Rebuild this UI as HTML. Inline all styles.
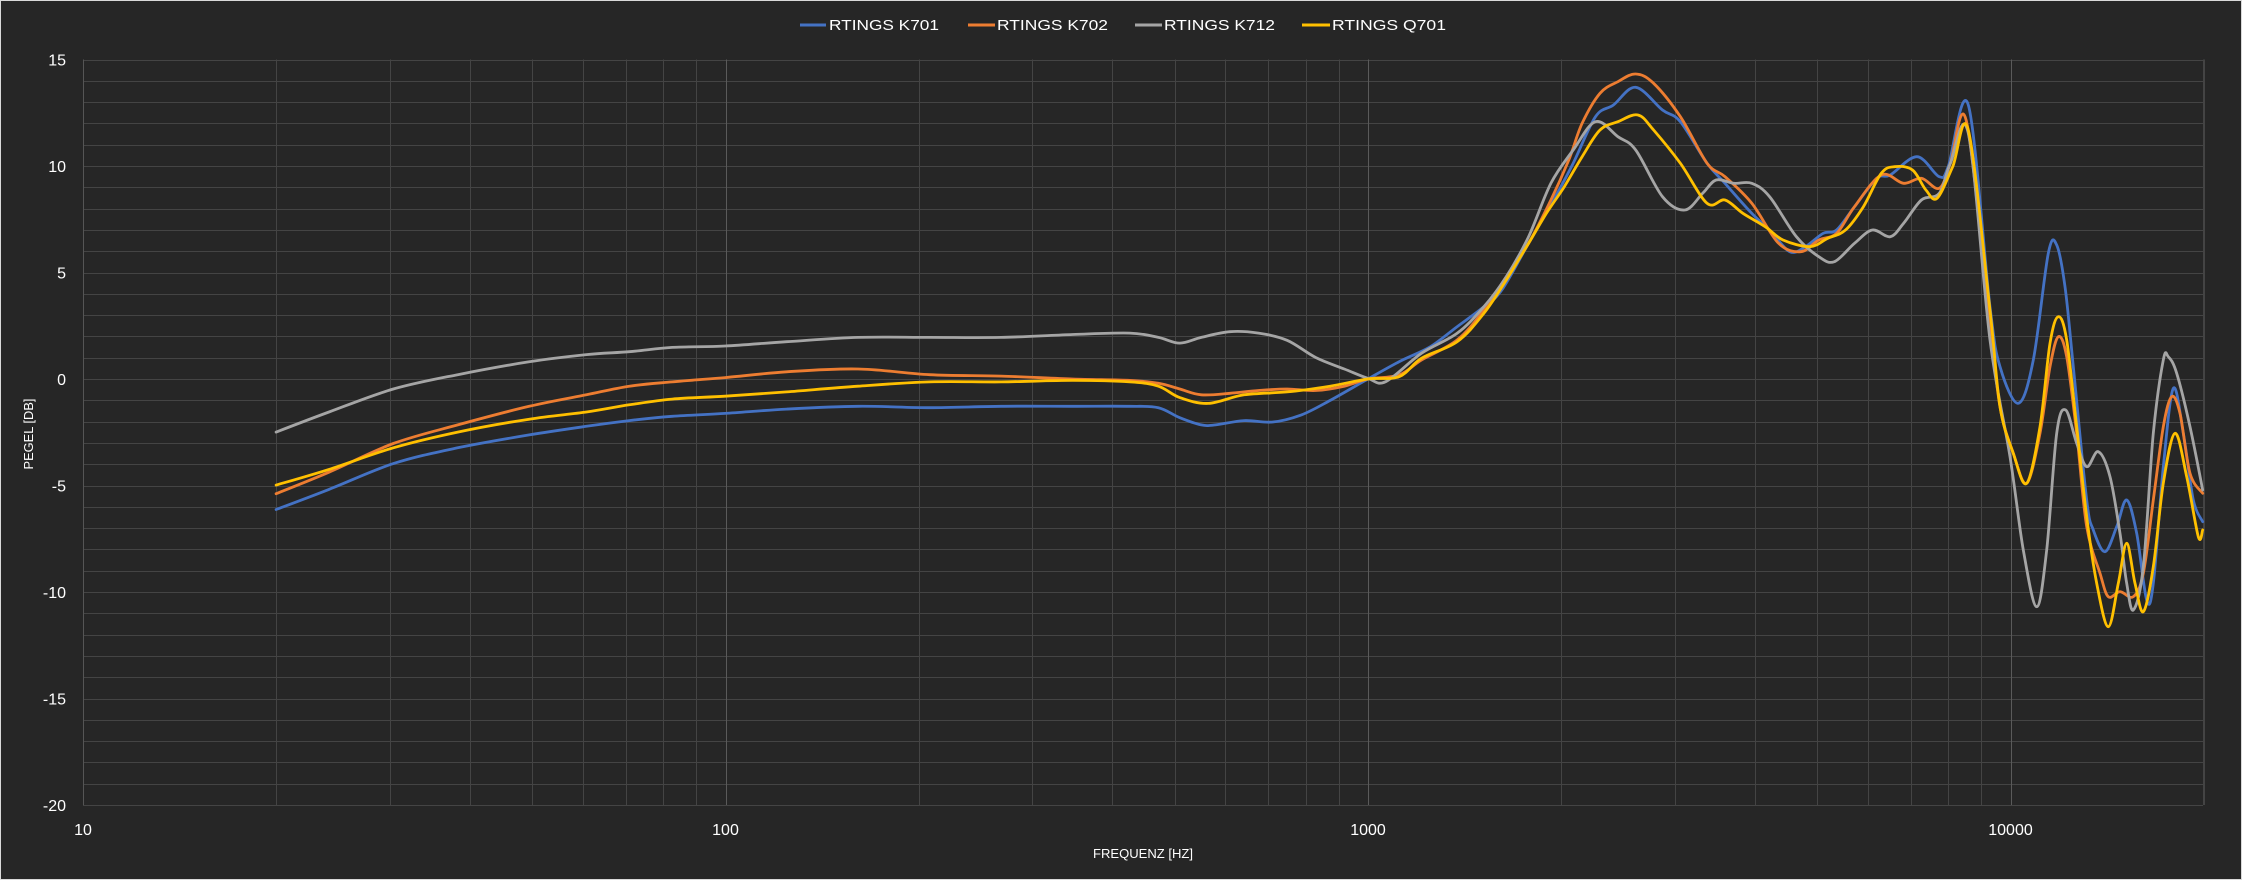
<!DOCTYPE html>
<html><head><meta charset="utf-8">
<style>
html,body{margin:0;padding:0;background:#262626;}
body{width:2242px;height:880px;overflow:hidden;position:relative;font-family:"Liberation Sans",sans-serif;}
#frame{position:absolute;left:0;top:0;width:2240px;height:878px;border:1px solid #d9d9d9;background:#262626;}
svg{position:absolute;left:0;top:0;}
</style></head>
<body>
<div id="frame"></div>
<svg id="s" width="2242" height="880" xmlns="http://www.w3.org/2000/svg" font-family="Liberation Sans, sans-serif">
<g id="grid"></g>
<g id="labels" fill="#ffffff" font-size="16"></g>
<g id="curves" fill="none" stroke-width="2.8" stroke-linejoin="round" stroke-linecap="round"></g>
<g font-size="15" fill="#fff">
<line x1="800" y1="25" x2="826" y2="25" stroke="#4472c4" stroke-width="3"/><text x="829" y="30" textLength="110" lengthAdjust="spacingAndGlyphs">RTINGS K701</text>
<line x1="968" y1="25" x2="995" y2="25" stroke="#ed7d31" stroke-width="3"/><text x="997" y="30" textLength="111" lengthAdjust="spacingAndGlyphs">RTINGS K702</text>
<line x1="1135" y1="25" x2="1162" y2="25" stroke="#a5a5a5" stroke-width="3"/><text x="1164" y="30" textLength="111" lengthAdjust="spacingAndGlyphs">RTINGS K712</text>
<line x1="1302" y1="25" x2="1330" y2="25" stroke="#ffc000" stroke-width="3"/><text x="1332" y="30" textLength="114" lengthAdjust="spacingAndGlyphs">RTINGS Q701</text>
</g>
<text x="1143" y="858" font-size="13" fill="#fff" text-anchor="middle" textLength="100" lengthAdjust="spacingAndGlyphs">FREQUENZ [HZ]</text>
<text transform="translate(33,434) rotate(-90)" font-size="13" fill="#fff" text-anchor="middle" textLength="71" lengthAdjust="spacingAndGlyphs">PEGEL [DB]</text>
</svg>
<script>
var NS="http://www.w3.org/2000/svg";
var L=83,R=2203,T=59.5,B=805,D=642.5,PD=21.3;
function X(f){return L+D*Math.log10(f/10);}
function Y(db){return T+(15-db)*PD;}
var g=document.getElementById('grid'),lb=document.getElementById('labels');
function ln(x1,y1,x2,y2,c){var e=document.createElementNS(NS,'line');e.setAttribute('x1',x1);e.setAttribute('y1',y1);e.setAttribute('x2',x2);e.setAttribute('y2',y2);e.setAttribute('stroke',c);e.setAttribute('stroke-width',1);g.appendChild(e);}
for(var d=15;d>=-20;d--){var y=Math.round(Y(d))+0.5;ln(L,y,R,y,'#444');}
[10,100,1000,10000].forEach(function(dec){for(var k=1;k<10;k++){var f=dec*k;if(f>20000)break;var x=Math.round(X(f))+0.5;ln(x,T,x,B,k==1?'#5a5a5a':'#444');}});
ln(L+0.5,T,L+0.5,B,'#555');ln(R+0.5,T,R+0.5,B,'#444');
function tx(s,x,y,anc){var e=document.createElementNS(NS,'text');e.setAttribute('x',x);e.setAttribute('y',y);e.setAttribute('text-anchor',anc);e.textContent=s;lb.appendChild(e);}
for(var d=15;d>=-20;d-=5){tx(String(d),66,Y(d)+6,'end');}
[10,100,1000,10000].forEach(function(f){tx(String(f),X(f),835,'middle');});
// low region in display coords
function low(a){return a.map(function(p){var db=(265-p[1])/14.85;return [83+(p[0]-58)*642.5/449.3,Y(db)];});}
function z4(a){return a.map(function(p){return [1350+p[0]/2.24,50+p[1]/3];});}
function z5(a){return a.map(function(p){return [1900+p[0]/3,200+p[1]/3];});}
var data={
'#a5a5a5':low([[193,302],[230,288],[275,272],[320,262],[370,253],[410,248],[440,246],[470,243],[507,242],[550,239],[600,236],[650,236],[700,236],[750,234],[790,233],[810,236],[825,240],[840,236],[860,232],[880,233],[900,238],[920,250],[940,258]]).concat(z4([[40,985],[80,995],[160,910],[240,850],[300,770],[350,680],[400,560],[450,400],[500,300],[550,215],[600,260],[640,300],[700,440],[750,480],[790,430],[820,390],[860,400],[900,400],[940,440],[1000,560],[1050,620],[1085,635],[1130,580],[1170,540],[1210,560],[1240,520],[1280,450],[1320,430],[1345,340],[1385,250]])).concat(z5([[270,420],[330,770],[370,1050],[410,1220],[440,1050],[470,700],[497,630],[530,730],[560,800],[595,755],[630,830],[660,1000],[680,1150],[700,1230],[730,1100],[760,700],[790,480],[805,470],[830,520],[870,680],[908,870]])),
'#4472c4':low([[193,356],[230,342],[275,324],[320,313],[370,304],[410,298],[440,294],[470,291],[507,289],[550,286],[600,284],[650,285],[700,284],[750,284],[790,284],[810,285],[825,292],[840,297],[850,297],[870,294],[890,295],[910,290],[930,280]]).concat(z4([[40,987],[110,935],[180,890],[240,830],[300,770],[340,720],[400,580],[460,440],[500,340],[550,200],[590,165],[640,112],[700,180],[740,215],[800,340],[840,400],[900,490],[940,540],[985,605],[1020,590],[1060,550],[1090,540],[1130,470],[1180,385],[1210,375],[1270,320],[1320,380],[1340,350],[1385,165]])).concat(z5([[270,320],[300,500],[355,610],[400,480],[445,160],[470,135],[495,260],[520,500],[560,900],[580,990],[615,1055],[650,980],[680,900],[710,1000],[740,1200],[760,1150],[790,800],[820,565],[850,700],[880,900],[908,965]])),
'#ed7d31':low([[193,345],[230,330],[275,310],[320,297],[370,284],[410,276],[440,270],[470,267],[507,264],[550,260],[600,258],[650,262],[700,263],[750,265],[790,266],[810,268],[825,272],[840,276],[860,275],[880,273],[900,272],[920,273],[940,270]]).concat(z4([[40,987],[110,975],[160,930],[240,870],[300,780],[350,680],[400,580],[450,450],[490,330],[520,220],[560,130],[600,95],[640,72],[680,100],[740,200],[800,340],[840,380],[900,460],[960,580],[1010,605],[1050,570],[1090,550],[1130,470],[1190,375],[1240,400],[1280,385],[1320,415],[1345,340],[1380,210]])).concat(z5([[265,330],[300,620],[340,760],[380,850],[420,700],[450,500],[475,410],[500,470],[530,700],[560,980],[600,1120],[625,1190],[660,1175],[700,1190],[730,1120],[760,900],[790,680],[815,590],[840,640],[870,820],[908,880]])),
'#ffc000':low([[193,339],[230,328],[275,313],[320,302],[370,293],[410,288],[440,283],[470,279],[507,277],[550,274],[600,270],[650,267],[700,267],[750,266],[790,267],[810,270],[825,278],[845,282],[870,276],[900,274],[930,270]]).concat(z4([[40,987],[110,980],[160,925],[240,875],[300,790],[350,690],[400,580],[440,490],[480,410],[520,320],[560,240],[600,215],[645,195],[680,240],[740,340],[800,460],[840,450],[880,490],[930,530],[970,570],[1030,590],[1070,565],[1110,540],[1150,470],[1190,370],[1220,350],[1260,360],[1290,420],[1315,445],[1350,350],[1385,240]])).concat(z5([[270,330],[300,620],[340,760],[380,850],[420,680],[450,430],[475,350],[500,420],[530,680],[560,950],[590,1150],[625,1280],[655,1150],[680,1030],[705,1150],[730,1235],[760,1100],[790,850],[825,700],[860,830],[895,1010],[908,990]]))
};
function path(p){var s='M'+p[0][0].toFixed(1)+' '+p[0][1].toFixed(1);for(var i=0;i<p.length-1;i++){var p0=p[i-1]||p[i],p1=p[i],p2=p[i+1],p3=p[i+2]||p2;var c1=[p1[0]+(p2[0]-p0[0])/6,p1[1]+(p2[1]-p0[1])/6],c2=[p2[0]-(p3[0]-p1[0])/6,p2[1]-(p3[1]-p1[1])/6];s+='C'+c1[0].toFixed(1)+' '+c1[1].toFixed(1)+' '+c2[0].toFixed(1)+' '+c2[1].toFixed(1)+' '+p2[0].toFixed(1)+' '+p2[1].toFixed(1);}return s;}
var cg=document.getElementById('curves');
['#4472c4','#ed7d31','#a5a5a5','#ffc000'].forEach(function(c){var e=document.createElementNS(NS,'path');e.setAttribute('d',path(data[c]));e.setAttribute('stroke',c);cg.appendChild(e);});
</script>
</body></html>
